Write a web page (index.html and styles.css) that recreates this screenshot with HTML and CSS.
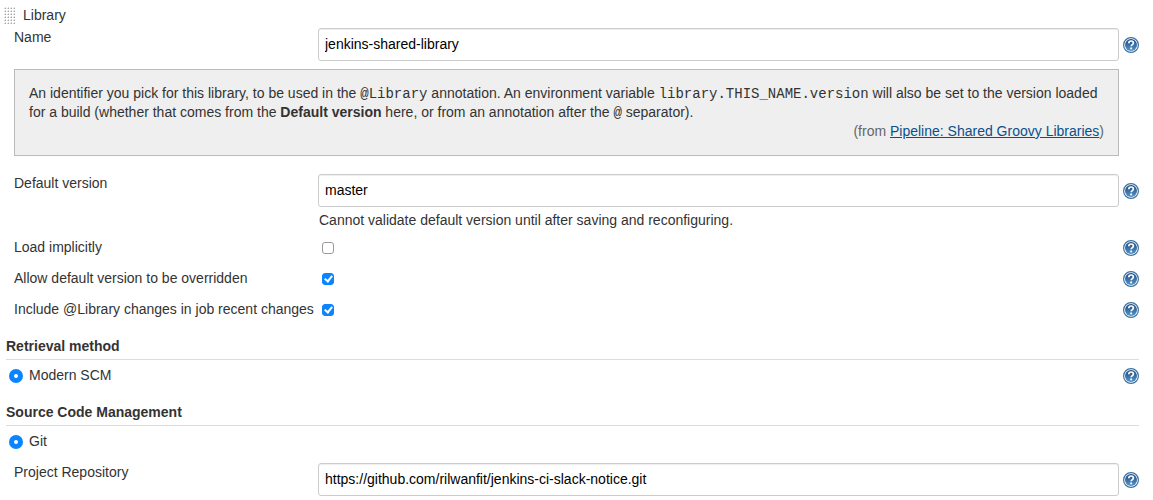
FILE: index.html
```html
<!DOCTYPE html>
<html lang="en">
<head>
<meta charset="utf-8">
<title>Global Pipeline Libraries</title>
<link rel="stylesheet" href="styles.css">
</head>
<body>
<svg class="defs" aria-hidden="true">
  <defs>
    <linearGradient id="blue" x1="0" y1="0" x2="0" y2="1">
      <stop offset="0" stop-color="#1c4a80"/>
      <stop offset="1" stop-color="#5596c8"/>
    </linearGradient>
    <symbol id="help" viewBox="0 0 16 16">
      <circle cx="8" cy="8" r="7.4" fill="#fff" stroke="#3c72a3" stroke-width="1.2"/>
      <circle cx="8" cy="8" r="6" fill="url(#blue)"/>
      <path d="M5.8 6.2C5.8 4.7 6.8 4 8.1 4c1.4 0 2.3.8 2.3 2 0 1.6-2.2 1.6-2.2 3.3" fill="none" stroke="#fff" stroke-width="1.7"/>
      <rect x="7.2" y="10.5" width="1.9" height="1.8" fill="#fff"/>
    </symbol>
    <pattern id="dots" width="3" height="3" patternUnits="userSpaceOnUse">
      <path d="M1 0h1v2H0V1h1z" fill="#d6d6d3"/>
      <path d="M1 1h1v1H1z" fill="#a6a6a2"/>
    </pattern>
  </defs>
</svg>
<form class="config">
  <div class="title">
    <svg class="grip" viewBox="0 0 12 18" aria-hidden="true"><rect width="12" height="18" fill="url(#dots)"/></svg>
    <span>Library</span>
  </div>
  <div class="row">
    <label class="label" for="name">Name</label>
    <div class="field"><input class="text" id="name" type="text" value="jenkins-shared-library"></div>
    <button class="help tall" type="button" aria-label="Help for Name"><svg class="icon"><use href="#help"/></svg></button>
  </div>
  <div class="note">
    <div>An identifier you pick for this library, to be used in the <code>@Library</code> annotation. An environment variable <code>library.THIS_NAME.version</code> will also be set to the version loaded for a build (whether that comes from the <b>Default version</b> here, or from an annotation after the <code>@</code> separator).</div>
    <div class="source">(from <a href="#">Pipeline: Shared Groovy Libraries</a>)</div>
  </div>
  <div class="row">
    <label class="label" for="version">Default version</label>
    <div class="field">
      <input class="text" id="version" type="text" value="master">
      <div class="message">Cannot validate default version until after saving and reconfiguring.</div>
    </div>
    <button class="help tall" type="button" aria-label="Help for Default version"><svg class="icon"><use href="#help"/></svg></button>
  </div>
  <div class="options">
    <div class="row">
      <label class="label" for="implicit">Load implicitly</label>
      <div class="field"><input class="check" id="implicit" type="checkbox"></div>
      <button class="help" type="button" aria-label="Help for Load implicitly"><svg class="icon"><use href="#help"/></svg></button>
    </div>
    <div class="row">
      <label class="label" for="override">Allow default version to be overridden</label>
      <div class="field"><input class="check" id="override" type="checkbox" checked></div>
      <button class="help" type="button" aria-label="Help for Allow default version to be overridden"><svg class="icon"><use href="#help"/></svg></button>
    </div>
    <div class="row">
      <label class="label" for="changes">Include @Library changes in job recent changes</label>
      <div class="field"><input class="check" id="changes" type="checkbox" checked></div>
      <button class="help" type="button" aria-label="Help for Include @Library changes"><svg class="icon"><use href="#help"/></svg></button>
    </div>
  </div>
  <h2 class="heading">Retrieval method</h2>
  <div class="choice">
    <input class="radio" id="modern" name="retrieval" type="radio" checked>
    <label class="grow" for="modern">Modern SCM</label>
    <button class="help" type="button" aria-label="Help for Modern SCM"><svg class="icon"><use href="#help"/></svg></button>
  </div>
  <h2 class="heading">Source Code Management</h2>
  <div class="choice">
    <input class="radio" id="git" name="scm" type="radio" checked>
    <label class="grow" for="git">Git</label>
  </div>
  <div class="row repository">
    <label class="label" for="repo">Project Repository</label>
    <div class="field"><input class="text" id="repo" type="text" value="https://github.com/rilwanfit/jenkins-ci-slack-notice.git"></div>
    <button class="help tall" type="button" aria-label="Help for Project Repository"><svg class="icon"><use href="#help"/></svg></button>
  </div>
</form>
</body>
</html>
```
FILE: styles.css
```css
*, *::before { box-sizing: border-box; }

body {
  margin: 0;
  background: #fff;
  color: #333;
  font: 14px/19px "Liberation Sans", Arial, sans-serif;
}

.defs { position: absolute; width: 0; height: 0; }

.config { padding: 6px 14px 4px 6px; }

.title {
  display: flex;
  align-items: center;
  gap: 7px;
  margin: 0 0 3px -2px;
}

.grip { width: 12px; height: 18px; }

.row {
  display: flex;
  align-items: flex-start;
  padding-left: 8px;
}

.label { flex: 0 0 304px; white-space: nowrap; }
.field { flex: 1; min-width: 0; }

.text {
  display: block;
  width: 100%;
  height: 33px;
  padding: 0 6px 2px;
  border: 1px solid #ccc;
  border-radius: 3px;
  background: #fff;
  box-shadow: inset 0 1px 1px rgba(0, 0, 0, 0.07);
  color: #000;
  font: inherit;
}

.message { padding: 4px 0 0 1px; }

.help {
  display: flex;
  align-items: center;
  flex: none;
  height: 20px;
  margin: 0 0 -1px 4px;
  padding: 0;
  border: 0;
  background: none;
}

.help.tall { height: 33px; }
.icon { width: 16px; height: 16px; }

.note {
  margin: 8px 20px 18px 8px;
  padding: 14px;
  border: 1px solid #bbb;
  background: #efefef;
}

.note code {
  font: 14px/14px "Liberation Mono", "Courier New", monospace;
}

.source { color: #666; text-align: right; }
.source a { color: #0b4f8a; }

.options {
  display: flex;
  flex-direction: column;
  gap: 12px;
  margin-top: 8px;
}

.options .row { height: 19px; }

.check, .radio {
  appearance: none;
  display: block;
  flex: none;
  margin: 0;
}

.check {
  width: 12px;
  height: 12px;
  margin: 4px;
  border: 1px solid #999;
  border-radius: 3px;
  background: #fff;
}

.check:checked {
  display: flex;
  align-items: flex-start;
  justify-content: center;
  border-color: #0a84ff;
  background: #0a84ff;
}

.check:checked::before {
  content: "";
  width: 5px;
  height: 8px;
  border: solid #fff;
  border-width: 0 2px 2px 0;
  transform: rotate(38deg);
}

.radio {
  width: 14px;
  height: 14px;
  border: 5px solid #0a84ff;
  border-radius: 50%;
  background: #fff;
}

.heading {
  margin: 18px 0 6px;
  padding-bottom: 3px;
  border-bottom: 1px solid #ddd;
  font-size: 14px;
  line-height: 19px;
}

.choice {
  display: flex;
  align-items: center;
  gap: 6px;
  height: 19px;
  padding-left: 3px;
}

.grow { flex: 1; }
.repository { margin-top: 12px; }
```
